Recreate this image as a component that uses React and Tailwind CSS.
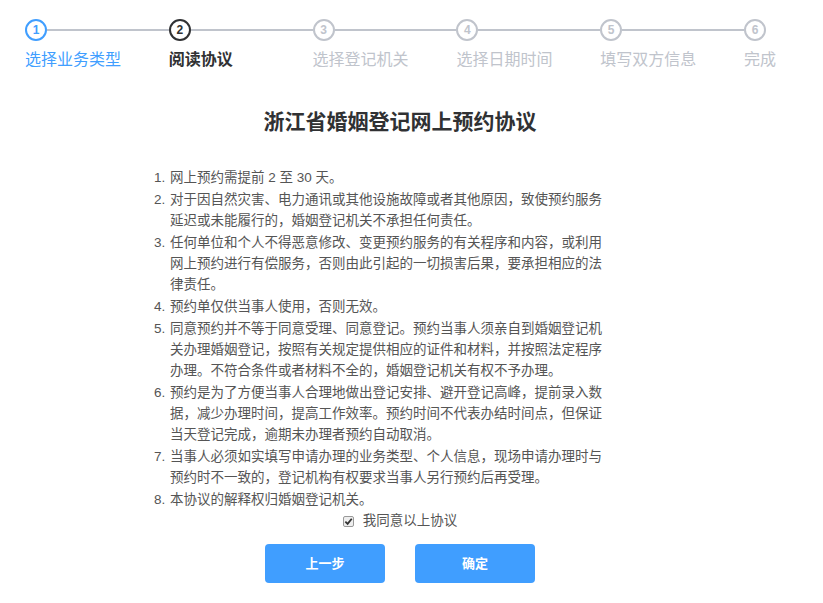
import React from 'react';

const steps = ['选择业务类型', '阅读协议', '选择登记机关', '选择日期时间', '填写双方信息', '完成'];

const terms = [
  '网上预约需提前 2 至 30 天。',
  '对于因自然灾害、电力通讯或其他设施故障或者其他原因，致使预约服务延迟或未能履行的，婚姻登记机关不承担任何责任。',
  '任何单位和个人不得恶意修改、变更预约服务的有关程序和内容，或利用网上预约进行有偿服务，否则由此引起的一切损害后果，要承担相应的法律责任。',
  '预约单仅供当事人使用，否则无效。',
  '同意预约并不等于同意受理、同意登记。预约当事人须亲自到婚姻登记机关办理婚姻登记，按照有关规定提供相应的证件和材料，并按照法定程序办理。不符合条件或者材料不全的，婚姻登记机关有权不予办理。',
  '预约是为了方便当事人合理地做出登记安排、避开登记高峰，提前录入数据，减少办理时间，提高工作效率。预约时间不代表办结时间点，但保证当天登记完成，逾期未办理者预约自动取消。',
  '当事人必须如实填写申请办理的业务类型、个人信息，现场申请办理时与预约时不一致的，登记机构有权要求当事人另行预约后再受理。',
  '本协议的解释权归婚姻登记机关。',
];

function Step({ index, label, last }) {
  // 0 = done, 1 = current, rest = waiting
  const circle =
    index === 0
      ? 'border-[#409eff] text-[#409eff]'
      : index === 1
      ? 'border-[#303133] text-[#303133]'
      : 'border-[#c0c4cc] text-[#c0c4cc]';
  const text =
    index === 0
      ? 'text-[#409eff]'
      : index === 1
      ? 'text-[#303133] font-bold'
      : 'text-[#c0c4cc]';

  return (
    <div className={last ? 'w-[60px] shrink-0' : 'w-[143.8px] shrink-0'}>
      <div className="flex items-center h-[22px]">
        <div
          className={`w-[22px] h-[22px] rounded-full border-2 flex items-center justify-center text-[12px] font-bold leading-none shrink-0 ${circle}`}
        >
          {index + 1}
        </div>
        {!last && <div className="flex-1 h-[2px] bg-[#c0c4cc]"></div>}
      </div>
      <div className={`mt-[8px] text-[16px] leading-[22px] whitespace-nowrap ${text}`}>{label}</div>
    </div>
  );
}

export default function App() {
  return (
    <div
      className="w-[823px] h-[603px] bg-white overflow-hidden"
      style={{ fontFamily: '"Liberation Sans", "Noto Sans CJK SC", sans-serif' }}
    >
      <div className="flex pl-[25px] pt-[19px]">
        {steps.map((s, i) => (
          <Step key={s} index={i} label={s} last={i === steps.length - 1} />
        ))}
      </div>

      <div className="w-[800px]">
        <h1 className="mt-[39px] text-center text-[21px] leading-[24px] font-bold text-[#303133]">
          浙江省婚姻登记网上预约协议
        </h1>

        <div className="mt-[33px] ml-[154px] w-[460px] text-[13.5px] leading-[21px] text-[#555]">
          {terms.map((t, i) => (
            <div key={i} className="flex mb-[1px]">
              <span className="w-[16px] shrink-0">{i + 1}.</span>
              <span className="w-[438px]">{t}</span>
            </div>
          ))}
        </div>

        <div className="flex items-center justify-center gap-[9px] h-[21px] text-[13.5px] text-[#555]">
          <span className="w-[11px] h-[11px] border border-[#999] bg-[#eee] rounded-[2px] flex items-center justify-center">
            <svg width="9" height="9" viewBox="0 0 10 10">
              <path d="M1.5 5.2 L4 7.6 L8.6 2" fill="none" stroke="#333" strokeWidth="2" />
            </svg>
          </span>
          <span>我同意以上协议</span>
        </div>

        <div className="mt-[12px] flex justify-center gap-[30px]">
          <button className="w-[120px] h-[39px] rounded-[4px] bg-[#409eff] text-white text-[13px] font-bold">
            上一步
          </button>
          <button className="w-[120px] h-[39px] rounded-[4px] bg-[#409eff] text-white text-[13px] font-bold">
            确定
          </button>
        </div>
      </div>
    </div>
  );
}
